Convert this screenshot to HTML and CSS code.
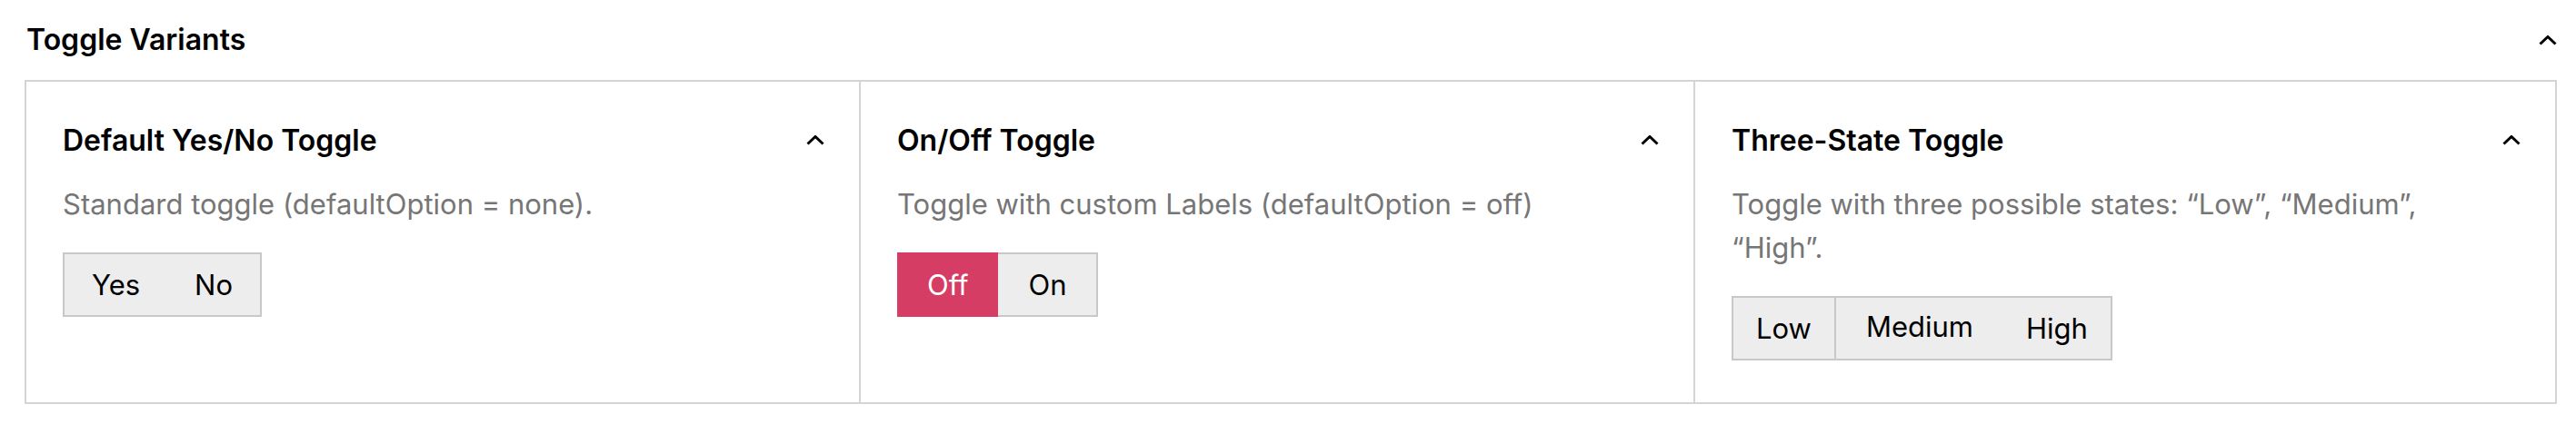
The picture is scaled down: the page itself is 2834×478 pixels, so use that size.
FILE: index.html
```html
<!DOCTYPE html>
<html lang="en">
<head>
  <meta charset="UTF-8" />
  <meta name="viewport" content="width=device-width, initial-scale=1" />
  <title>Toggle Variants</title>
  <link rel="stylesheet" href="styles.css">
</head>
<body>

  <section class="panel">
    <div class="panel-head">
      <h2>Toggle Variants</h2>
      <button class="chevron" aria-label="Collapse">
        <svg width="20" height="11" viewBox="0 0 20 11"><polyline points="1.5,9.5 10,1.5 18.5,9.5" /></svg>
      </button>
    </div>

    <div class="variants">
      <div class="variant">
        <div class="variant-head">
          <h3>Default Yes/No Toggle</h3>
          <button class="chevron" aria-label="Collapse">
            <svg width="20" height="11" viewBox="0 0 20 11"><polyline points="1.5,9.5 10,1.5 18.5,9.5" /></svg>
          </button>
        </div>
        <p class="desc">Standard toggle (defaultOption = none).</p>
        <div class="toggle">
          <button>Yes</button>
          <button>No</button>
        </div>
      </div>

      <div class="variant">
        <div class="variant-head">
          <h3>On/Off Toggle</h3>
          <button class="chevron" aria-label="Collapse">
            <svg width="20" height="11" viewBox="0 0 20 11"><polyline points="1.5,9.5 10,1.5 18.5,9.5" /></svg>
          </button>
        </div>
        <p class="desc">Toggle with custom Labels (defaultOption = off)</p>
        <div class="toggle">
          <button class="active">Off</button>
          <button class="after-active">On</button>
        </div>
      </div>

      <div class="variant">
        <div class="variant-head">
          <h3>Three-State Toggle</h3>
          <button class="chevron" aria-label="Collapse">
            <svg width="20" height="11" viewBox="0 0 20 11"><polyline points="1.5,9.5 10,1.5 18.5,9.5" /></svg>
          </button>
        </div>
        <p class="desc">Toggle with three possible states: “Low”, “Medium”, “High”.</p>
        <div class="toggle three">
          <button class="first">Low</button>
          <button class="mid">Medium</button>
          <button>High</button>
        </div>
      </div>
    </div>
  </section>

</body>
</html>
```

FILE: styles.css
```css
body {
  margin: 0;
  padding: 0;
  background: #fff;
  font-family: 'Inter', 'Noto Sans', sans-serif;
  color: #000;
}

.panel {
  padding: 26px 21px 0 27px;
}

.panel-head {
  display: flex;
  justify-content: space-between;
  align-items: center;
  height: 36px;
  margin-bottom: 26px;
}

.panel-head h2 {
  margin: 0 0 0 2px;
  font-size: 32px;
  font-weight: 600;
  line-height: 36px;
}

.chevron {
  background: none;
  border: none;
  padding: 0;
  display: flex;
  align-items: center;
  cursor: pointer;
}

.chevron svg polyline {
  fill: none;
  stroke: #000;
  stroke-width: 3;
}

.variants {
  display: grid;
  grid-template-columns: 918px 918px 1fr;
  border: 2px solid #d4d4d4;
}

.variant {
  padding: 40px 38px 46px 40px;
  border-right: 2px solid #d4d4d4;
}

.variant:last-child {
  border-right: none;
}

.variant-head {
  display: flex;
  justify-content: space-between;
  align-items: center;
  height: 48px;
  margin-bottom: 23px;
}

.variant-head h3 {
  margin: 0;
  font-size: 32px;
  font-weight: 600;
}

.desc {
  max-width: 830px;
  margin: 0 0 29px;
  font-size: 31px;
  line-height: 48px;
  color: #767676;
}

.toggle {
  display: inline-flex;
  border: 2px solid #c8c8c8;
  background: #ededed;
}

.toggle button {
  font-family: inherit;
  font-size: 31px;
  color: #000;
  background: none;
  border: none;
  height: 67px;
  padding: 0 30px;
  cursor: pointer;
}

.toggle button.active {
  background: #d63d65;
  color: #fff;
  margin: -2px 0 -2px -2px;
  height: 71px;
  padding: 0 33px;
}

.toggle button.after-active {
  padding: 0 33px;
}

.three button {
  padding: 0 25px;
}

.three .first {
  border-right: 2px solid #c8c8c8;
}

.three .mid {
  padding: 0 33px 4px;
}
```
